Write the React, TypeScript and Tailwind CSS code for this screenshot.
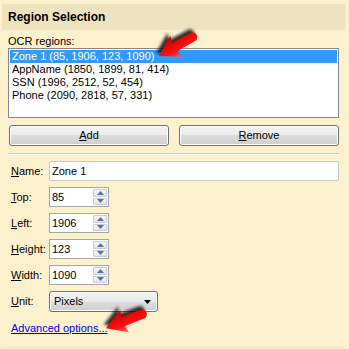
import React from 'react';

const rows = [
  'Zone 1 (85, 1906, 123, 1090)',
  'AppName (1850, 1899, 81, 414)',
  'SSN (1996, 2512, 52, 454)',
  'Phone (2090, 2818, 57, 331)',
];

const Spinner = ({ value }: { value: string }) => (
  <div className="flex h-[20px] w-[60px] border border-[#a5a5a5] bg-white">
    <div className="flex flex-1 items-center pl-[2px]">{value}</div>
    <div className="my-[1px] mr-[1px] flex w-[14px] flex-col gap-[1px]">
      <div className="flex flex-1 items-center justify-center rounded-[1px] border border-[#c8cdd6] bg-[linear-gradient(to_bottom,#f7f7f7,#e4e4e4)]">
        <svg width="7" height="4" viewBox="0 0 7 4"><path d="M0 4 L3.5 0 L7 4 Z" fill="#5b6fa8" /></svg>
      </div>
      <div className="flex flex-1 items-center justify-center rounded-[1px] border border-[#c8cdd6] bg-[linear-gradient(to_bottom,#f7f7f7,#e4e4e4)]">
        <svg width="7" height="4" viewBox="0 0 7 4"><path d="M0 0 L3.5 4 L7 0 Z" fill="#5b6fa8" /></svg>
      </div>
    </div>
  </div>
);

const Label = ({ first, rest }: { first: string; rest: string }) => (
  <div className="w-[41px] pl-[3px]">
    <span className="underline">{first}</span>
    {rest}
  </div>
);

const btn =
  'flex h-[21px] flex-1 items-center justify-center rounded-[3px] border border-[#707070] bg-[linear-gradient(to_bottom,#f2f2f2_0%,#ebebeb_50%,#dddddd_50%,#cfcfcf_100%)] shadow-[inset_0_0_0_1px_#fcfcfc]';

const Arrow = ({ x, y, angle }: { x: number; y: number; angle: number }) => {
  const d = 'M4,-4.5 L27,-5 L25,-12 L45,0 L25,12 L27,5 L4,4.5 Q-1,0 4,-4.5 Z';
  return (
    <g transform={`translate(${x} ${y}) rotate(${angle})`}>
      <path d={d} fill="#000" opacity="0.8" filter="url(#blur)" transform="translate(1 4)" />
      <path d={d} fill="url(#red)" />
    </g>
  );
};

export default function App() {
  return (
    <div className="relative h-[349px] w-[349px] overflow-hidden bg-[#fdf0cd] text-[11px] leading-[13px] text-black font-['Liberation_Sans',Arial,sans-serif]">
      <div className="mx-[2px] mt-[4px] flex h-[26px] w-[343px] items-center bg-[#efe3bf] pl-[6px] text-[12px] font-bold">
        Region Selection
      </div>

      <div className="flex flex-col pl-[8px] pr-[10px]">
        <div className="mt-[4px] h-[14px] pt-[1px]">OCR regions:</div>
        <div className="h-[70px] border border-[#828790] bg-white p-[1px]">
          {rows.map((r, i) => (
            <div
              key={r}
              className={`h-[13px] pl-[2px] ${i === 0 ? 'bg-[#3399ff] text-white' : ''}`}
            >
              {r}
            </div>
          ))}
        </div>

        <div className="mt-[7px] flex gap-[10px] pl-[1px]">
          <button className={btn}>
            <span><span className="underline">A</span>dd</span>
          </button>
          <button className={btn}>
            <span><span className="underline">R</span>emove</span>
          </button>
        </div>

        <div className="mt-[7px] h-[2px] border-t border-[#d2c6a6] border-b border-b-white" />

        <div className="mt-[6px] flex flex-col gap-[6px]">
          <div className="flex items-center">
            <Label first="N" rest="ame:" />
            <div className="flex h-[20px] flex-1 items-center rounded-[2px] border border-[#c9c9c9] bg-white pl-[2px]">Zone 1</div>
          </div>
          <div className="flex items-center">
            <Label first="T" rest="op:" />
            <Spinner value="85" />
          </div>
          <div className="flex items-center">
            <Label first="L" rest="eft:" />
            <Spinner value="1906" />
          </div>
          <div className="flex items-center">
            <Label first="H" rest="eight:" />
            <Spinner value="123" />
          </div>
          <div className="flex items-center">
            <Label first="W" rest="idth:" />
            <Spinner value="1090" />
          </div>
          <div className="flex items-center">
            <Label first="U" rest="nit:" />
            <div className="flex h-[21px] w-[109px] items-center justify-between rounded-[3px] border border-[#707070] bg-[linear-gradient(to_bottom,#f2f2f2_0%,#ebebeb_50%,#dddddd_50%,#cfcfcf_100%)] pl-[4px] pr-[6px] shadow-[inset_0_0_0_1px_#fcfcfc]">
              <span>Pixels</span>
              <svg width="7" height="4" viewBox="0 0 7 4"><path d="M0 0 L3.5 4 L7 0 Z" fill="#000" /></svg>
            </div>
          </div>
        </div>

        <div className="mt-[10px] pl-[3px]">
          <span className="text-[#0000ff] underline">Advanced options...</span>
        </div>
      </div>

      <div className="absolute bottom-[1px] left-[2px] h-[1px] w-[343px] bg-[#efe3bf]" />

      <svg className="pointer-events-none absolute inset-0" width="349" height="349">
        <defs>
          <filter id="blur" x="-50%" y="-50%" width="200%" height="200%">
            <feGaussianBlur stdDeviation="1.8" />
          </filter>
          <linearGradient id="red" x1="0" y1="-12" x2="0" y2="12" gradientUnits="userSpaceOnUse">
            <stop offset="0" stopColor="#ff6060" />
            <stop offset="0.35" stopColor="#ff1010" />
            <stop offset="1" stopColor="#c80000" />
          </linearGradient>
        </defs>
        <Arrow x={198} y={34} angle={150.6} />
        <Arrow x={148} y={312} angle={159} />
      </svg>
    </div>
  );
}
